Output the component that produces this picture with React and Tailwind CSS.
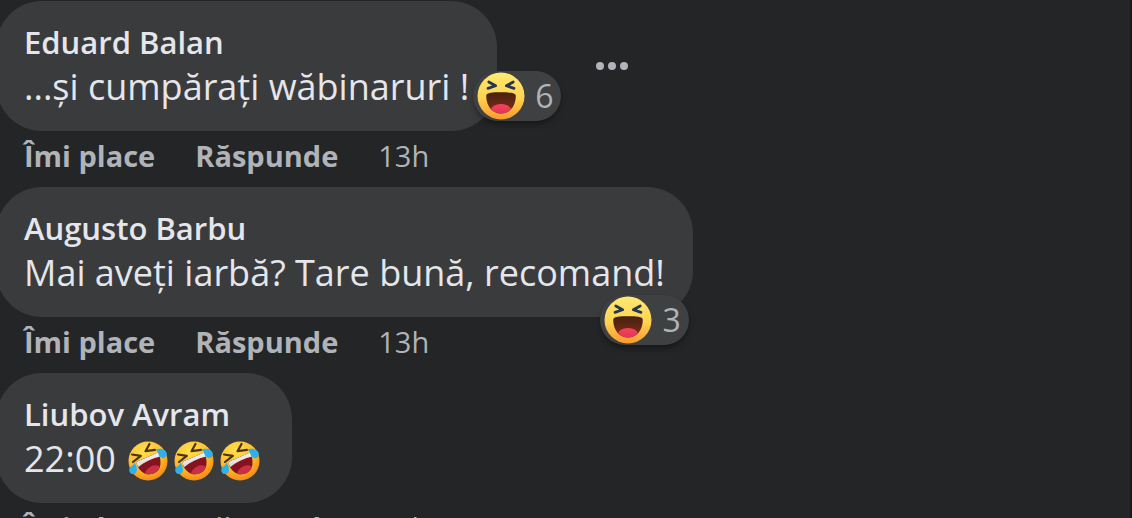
const comments = [
  {
    id: 1,
    author: "Eduard Balan",
    text: "...și cumpărați wăbinaruri !",
    reactions: 6,
    badge: "left-full -ml-6 bottom-2.5",
    menu: true,
  },
  {
    id: 2,
    author: "Augusto Barbu",
    text: "Mai aveți iarbă? Tare bună, recomand!",
    reactions: 3,
    badge: "right-1 -bottom-7",
  },
  { id: 3, author: "Liubov Avram", text: "22:00", laughs: 3 },
];

function HahaIcon() {
  return (
    <svg viewBox="0 0 48 48" className="size-12 shrink-0" aria-hidden="true">
      <defs>
        <linearGradient id="haha-face" x1="0" y1="0" x2="0" y2="1">
          <stop offset="0" stopColor="#ffea72" />
          <stop offset="0.55" stopColor="#ffd252" />
          <stop offset="1" stopColor="#f79a2c" />
        </linearGradient>
        <linearGradient id="haha-mouth" x1="0" y1="0" x2="0" y2="1">
          <stop offset="0" stopColor="#45200f" />
          <stop offset="1" stopColor="#85301a" />
        </linearGradient>
        <linearGradient id="haha-tongue" x1="0" y1="0" x2="0" y2="1">
          <stop offset="0" stopColor="#f4445c" />
          <stop offset="1" stopColor="#dc2f54" />
        </linearGradient>
        <clipPath id="haha-clip">
          <path d="M9.200 23.800C9.200 20.600 16 20.300 24 20.300S38.800 20.600 38.800 23.800C38.800 34.500 32.500 41.600 24 41.600S9.200 34.500 9.200 23.800Z" />
        </clipPath>
      </defs>
      <circle cx="24" cy="24" r="23.500" fill="url(#haha-face)" />
      <g clipPath="url(#haha-clip)">
        <rect x="9" y="20" width="30" height="22" fill="url(#haha-mouth)" />
        <ellipse cx="24" cy="38" rx="10" ry="6" fill="url(#haha-tongue)" />
      </g>
      <g fill="none" stroke="#25364f" strokeWidth="2.800" strokeLinecap="round" strokeLinejoin="round">
        <path d="M11.800 10 18.600 13.800 11 16.400" />
        <path d="M36.200 10 29.400 13.800 37 16.400" />
      </g>
    </svg>
  );
}

function RoflIcon() {
  return (
    <svg viewBox="0 0 40 40" className="size-10 shrink-0" aria-hidden="true">
      <defs>
        <radialGradient id="rofl-face" cx="0.4" cy="0.25" r="0.8">
          <stop offset="0" stopColor="#ffe04f" />
          <stop offset="0.55" stopColor="#fdc02f" />
          <stop offset="1" stopColor="#f58412" />
        </radialGradient>
        <linearGradient id="rofl-teeth" x1="0" y1="0" x2="0.3" y2="1">
          <stop offset="0" stopColor="#ffffff" />
          <stop offset="1" stopColor="#d9d4d8" />
        </linearGradient>
        <clipPath id="rofl-clip">
          <path d="M8.500 22.500C8 21 9 20.500 10 20L28 12.500C29.500 11.800 30.500 12 31 13.500 34 22 32.500 29 26.500 32 19.500 35.500 11.500 32 8.500 22.500Z" />
        </clipPath>
      </defs>
      <circle cx="20" cy="20" r="19.500" fill="url(#rofl-face)" />
      <g clipPath="url(#rofl-clip)">
        <rect width="40" height="40" fill="#84121f" />
        <ellipse cx="25" cy="30.500" rx="8.500" ry="5.500" fill="#c92f45" transform="rotate(-28 25 30.500)" />
        <path d="M7 21.500 30.500 11 32.500 15.500C25 17 16 21 10.500 26Z" fill="url(#rofl-teeth)" />
      </g>
      <g fill="none" stroke="#4b3310" strokeWidth="2.200" strokeLinecap="round" strokeLinejoin="round">
        <path d="M4 13.500 12.800 14.800 5 21" />
        <path d="M21.500 3 17.500 10.200 27 8.800" />
      </g>
      <path d="M27.500 8.500C32 6.500 38 8.500 38.800 12.500c.5 3.500-3 5.800-5.800 4C30.500 14.800 30.500 11 27.500 8.500Z" fill="#2fb0ea" />
      <path d="M6.500 21.500C9 25.500 10.500 31 6.500 32.700 3.500 34 .8 31.500 1.300 28.300 1.800 25.500 5.500 25 6.500 21.500Z" fill="#2fb0ea" />
    </svg>
  );
}

function ReactionBadge({ count, className }) {
  return (
    <button
      aria-label={`${count} reacții`}
      className={`absolute flex h-[50px] items-center gap-2.5 rounded-full bg-[#3e4042] pr-2 pl-1 text-[32px] text-[#b0b3b8] shadow-md shadow-black/30 ${className}`}
    >
      <HahaIcon />
      {count}
    </button>
  );
}

function Comment({ comment }) {
  return (
    <article>
      <div className="flex items-center">
        <div className="relative w-fit rounded-[46px] bg-[#3a3b3c] px-7 pt-[18px] pb-[22px]">
          <a href="#profil" className="block text-[31px] leading-[46px] font-semibold text-[#e4e6eb]">
            {comment.author}
          </a>
          <p className="flex items-center gap-3 text-[36px] leading-[44px] whitespace-nowrap text-[#e4e6eb]">
            {comment.text}
            {comment.laughs && (
              <span className="flex gap-1.5 pt-1 pr-1">
                {Array.from({ length: comment.laughs }, (_, i) => (
                  <RoflIcon key={i} />
                ))}
              </span>
            )}
          </p>
          {comment.reactions && (
            <ReactionBadge count={comment.reactions} className={comment.badge} />
          )}
        </div>
        {comment.menu && (
          <button aria-label="Mai multe" className="ml-[99px] flex gap-1 text-[#b0b3b8]">
            <span className="size-2 rounded-full bg-current" />
            <span className="size-2 rounded-full bg-current" />
            <span className="size-2 rounded-full bg-current" />
          </button>
        )}
      </div>
      <div className="flex h-14 items-center gap-10 pb-2 pl-7 text-[29px] leading-none text-[#b0b3b8]">
        <button className="font-bold">Îmi place</button>
        <button className="font-bold">Răspunde</button>
        <a href="#comentariu">13h</a>
      </div>
    </article>
  );
}

export default function App() {
  return (
    <main className="h-screen overflow-hidden border-r-2 border-[#18191a] bg-[#242526] pt-px font-['Segoe_UI','Open_Sans',sans-serif]">
      <div className="-ml-1">
        {comments.map((comment) => (
          <Comment key={comment.id} comment={comment} />
        ))}
      </div>
    </main>
  );
}
